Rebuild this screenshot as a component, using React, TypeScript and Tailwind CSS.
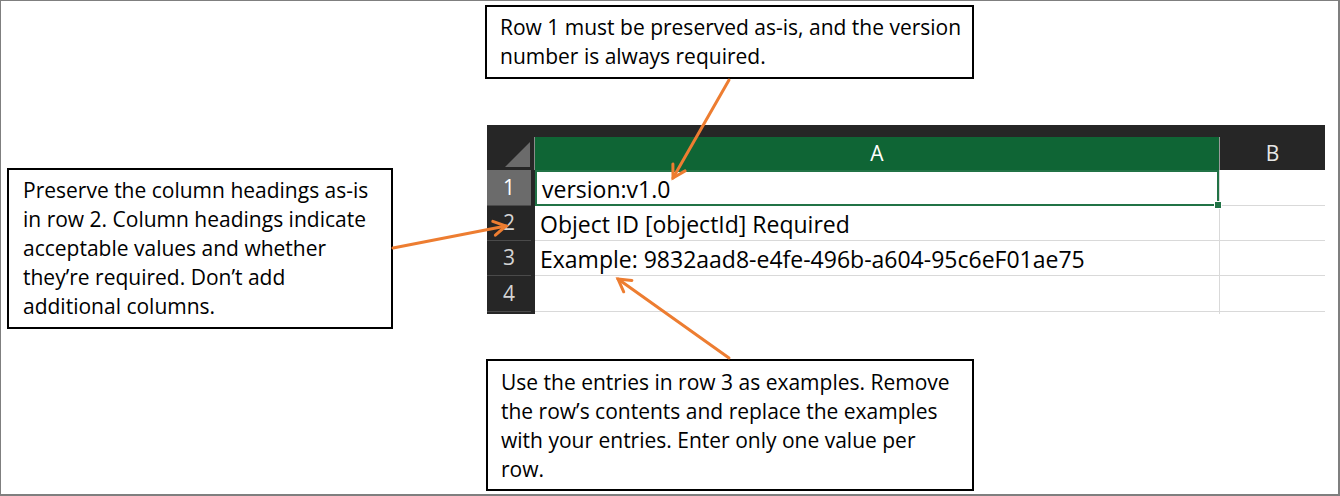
const FONT = { fontFamily: '"Open Sans", "Noto Sans", sans-serif' };

const Callout: React.FC<{ className: string; children: React.ReactNode }> = ({ className, children }) => (
  <div className={`border-2 border-black bg-white text-[21px] leading-[29px] text-black ${className}`}>{children}</div>
);

const Arrow: React.FC<{ from: [number, number]; to: [number, number]; w1: [number, number]; w2: [number, number] }> = ({
  from,
  to,
  w1,
  w2,
}) => (
  <g stroke="#ED7D31" strokeWidth="3" fill="none" strokeLinecap="round" strokeLinejoin="miter">
    <line x1={from[0]} y1={from[1]} x2={to[0]} y2={to[1]} />
    <polyline points={`${w1[0]},${w1[1]} ${to[0]},${to[1]} ${w2[0]},${w2[1]}`} />
  </g>
);

const rows = [
  { n: "1", text: "version:v1.0", h: "h-[36px]" },
  { n: "2", text: "Object ID [objectId] Required", h: "h-[35px]" },
  { n: "3", text: "Example: 9832aad8-e4fe-496b-a604-95c6eF01ae75", h: "h-[35px]" },
  { n: "4", text: "", h: "h-[36px]" },
];

const Sheet = () => (
  <div className="ml-[2px] mt-[46px] flex w-[838px] flex-col">
    {/* column headers */}
    <div className="flex h-[45px] bg-[#262626]">
      <div className="relative w-[48px]">
        <svg className="absolute left-0 top-0" width="48" height="45">
          <polygon points="18,42 43,17 43,42" fill="#6b6b6b" />
          <line x1="47.5" y1="12" x2="47.5" y2="45" stroke="#8a8a8a" />
        </svg>
      </div>
      <div className="mt-[12px] flex h-[33px] w-[684px] items-center justify-center bg-[#0f6535] text-[21px] text-white">
        A
      </div>
      <div className="mt-[12px] h-[33px] w-px bg-[#9a9a9a]" />
      <div className="mt-[12px] flex h-[33px] flex-1 items-center justify-center text-[21px] text-[#e6e6e6]">B</div>
    </div>
    {/* rows */}
    {rows.map((r, i) => (
      <div key={r.n} className={`flex ${r.h}`}>
        <div className="flex w-[48px] border-r-[4px] border-[#262626] bg-[#262626]">
          <div
            className={`flex flex-1 items-center justify-center border-b border-[#4a4a4a] text-[21px] ${
              i === 0 ? "bg-[#6b6b6b] text-white" : "text-[#d4d4d4]"
            }`}
          >
            {r.n}
          </div>
        </div>
        <div
          className={`relative flex w-[684px] items-center whitespace-nowrap pl-[5px] pt-[3px] text-[23px] text-black ${
            i === 0 ? "border-2 border-[#217346] pl-[3px]" : "border-b border-[#d9d9d9]"
          }`}
        >
          {r.text}
          {i === 0 && (
            <div className="absolute -bottom-[5px] -right-[5px] h-[8px] w-[8px] border border-white bg-[#217346]" />
          )}
        </div>
        <div className="w-px bg-[#d9d9d9]" />
        <div className="flex-1 border-b border-[#d9d9d9]" />
      </div>
    ))}
    <div className="flex h-[2px]">
      <div className="w-[48px] bg-[#262626]" />
      <div className="w-[684px]" />
      <div className="w-px bg-[#d9d9d9]" />
    </div>
  </div>
);

export default function App() {
  return (
    <div className="relative h-[496px] w-[1340px] bg-white" style={FONT}>
      <div className="flex h-full w-full border-l border-t border-b-2 border-r-2 border-[#7f7f7f]">
        <div className="pl-[6px] pt-[167px]">
          <Callout className="h-[161px] w-[386px] pl-[14px] pt-[6px]">
            Preserve the column headings as-is
            <br />
            in row 2. Column headings indicate
            <br />
            acceptable values and whether
            <br />
            they’re required. Don’t add
            <br />
            additional columns.
          </Callout>
        </div>
        <div className="ml-[92px] flex flex-col">
          <Callout className="mt-[4px] h-[74px] w-[489px] pl-[13px] pt-[6px]">
            Row 1 must be preserved as-is, and the version
            <br />
            number is always required.
          </Callout>
          <Sheet />
          <Callout className="ml-px mt-[45px] h-[132px] w-[488px] pl-[13px] pt-[7px]">
            Use the entries in row 3 as examples. Remove
            <br />
            the row’s contents and replace the examples
            <br />
            with your entries. Enter only one value per
            <br />
            row.
          </Callout>
        </div>
      </div>
      <svg className="pointer-events-none absolute left-0 top-0" width="1340" height="496">
        <Arrow from={[729, 80]} to={[673, 178]} w1={[685.1, 170.9]} w2={[672.9, 164]} />
        <Arrow from={[393, 248]} to={[506, 226]} w1={[492.8, 221.4]} w2={[495.4, 235.2]} />
        <Arrow from={[729, 358]} to={[618, 279]} w1={[623.7, 291.8]} w2={[631.9, 280.4]} />
      </svg>
    </div>
  );
}
